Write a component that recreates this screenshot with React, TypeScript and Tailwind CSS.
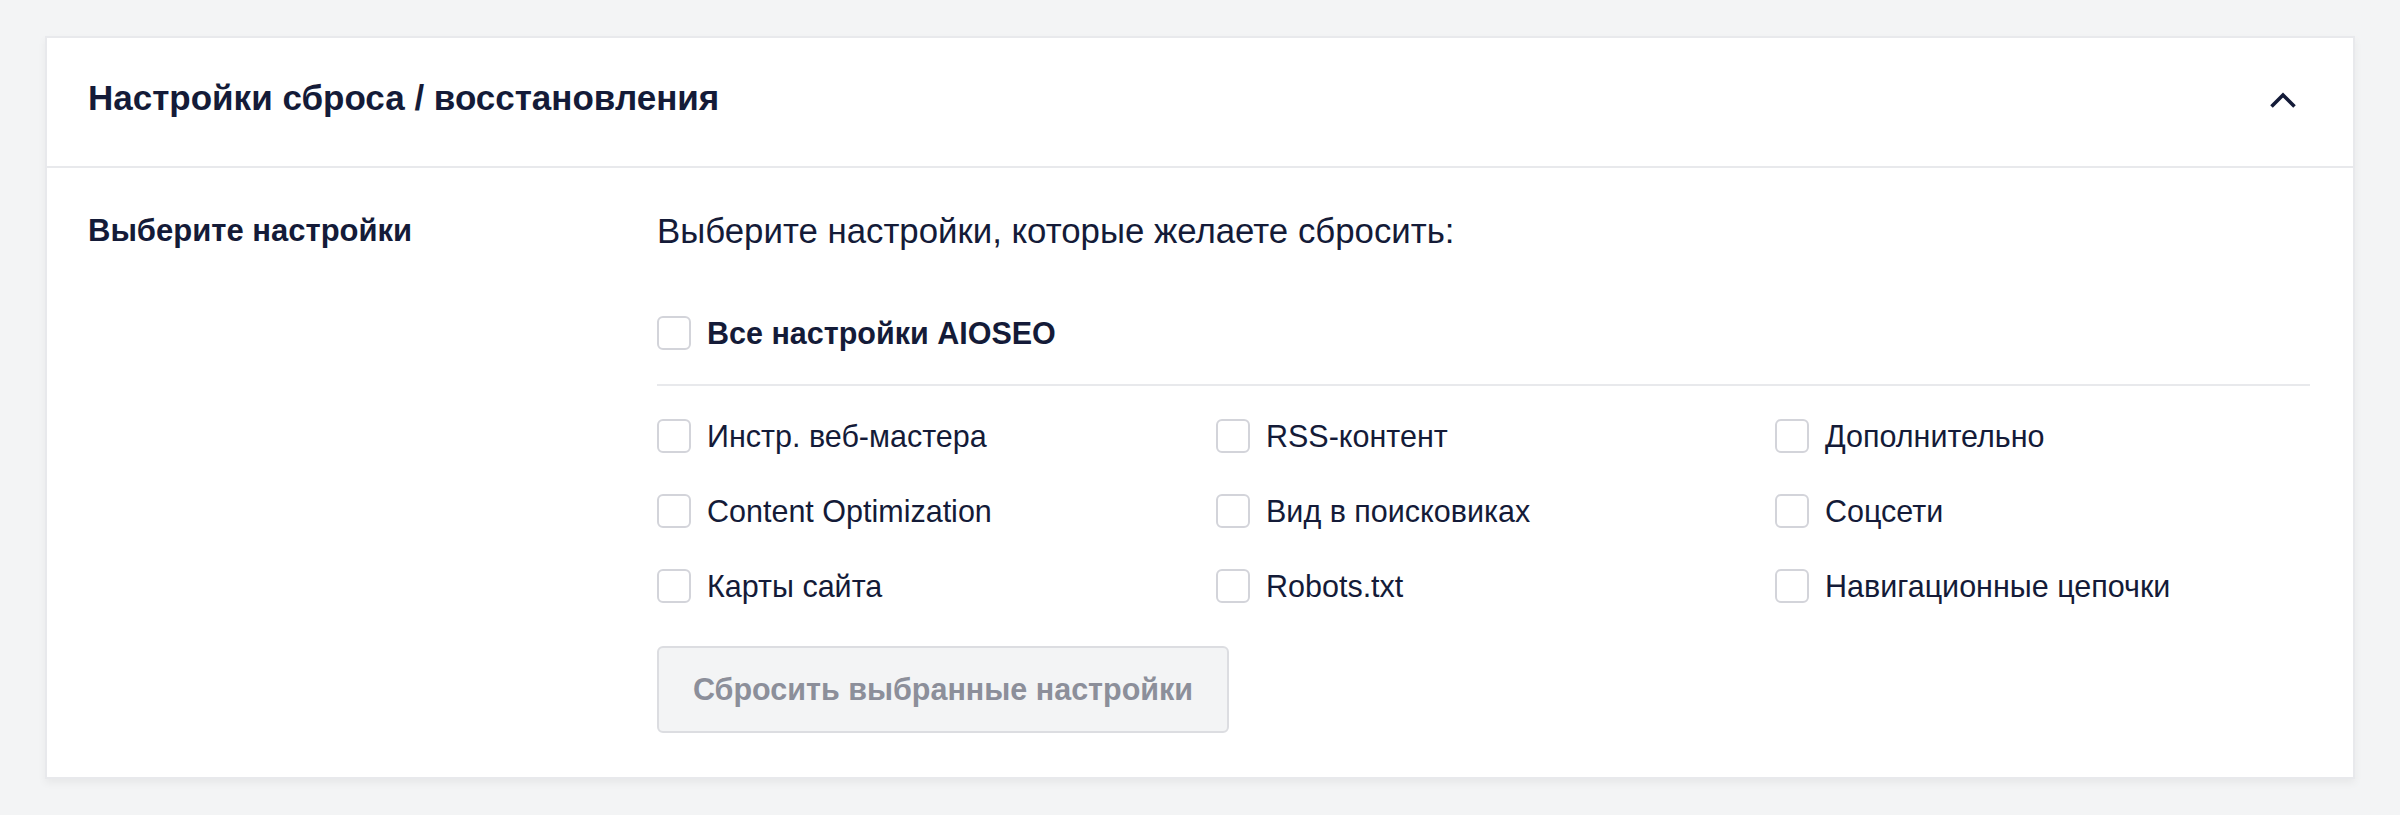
import React, { useState } from 'react';

const items = [
  'Инстр. веб-мастера',
  'RSS-контент',
  'Дополнительно',
  'Content Optimization',
  'Вид в поисковиках',
  'Соцсети',
  'Карты сайта',
  'Robots.txt',
  'Навигационные цепочки',
];

function Box({ checked, onClick }: { checked: boolean; onClick: () => void }) {
  return (
    <button
      type="button"
      onClick={onClick}
      className={`h-[34px] w-[34px] shrink-0 rounded-[6px] border-2 ${
        checked ? 'border-[#005ae0] bg-[#005ae0]' : 'border-[#d3d4da] bg-white'
      }`}
    />
  );
}

export default function App() {
  const [open, setOpen] = useState(true);
  const [all, setAll] = useState(false);
  const [picked, setPicked] = useState<string[]>([]);

  const toggle = (name: string) =>
    setPicked((p) => (p.includes(name) ? p.filter((x) => x !== name) : [...p, name]));

  return (
    <div
      className="min-h-[815px] bg-[#f3f4f5] px-[45px] pt-[36px] text-[#141b38]"
      style={{ fontFamily: '"Liberation Sans", Arial, sans-serif' }}
    >
      <section className="border-2 border-[#e8e9ec] bg-white shadow-[0_4px_8px_rgba(0,0,0,0.05)]">
        <header className="flex h-[130px] items-center justify-between border-b-2 border-[#e8e9ec] pl-[41px] pr-[56px]">
          <h2 className="mb-[10px] text-[35px] font-bold leading-none">Настройки сброса / восстановления</h2>
          <button type="button" onClick={() => setOpen(!open)} className="mb-[4px]">
            <svg width="28" height="17" viewBox="0 0 28 17" fill="none">
              <polyline
                points={open ? '2.5,14.5 14,3 25.5,14.5' : '2.5,3 14,14.5 25.5,3'}
                stroke="#141b38"
                strokeWidth="3.6"
              />
            </svg>
          </button>
        </header>

        {open && (
          <div className="flex pb-[44px] pl-[41px] pr-[43px] pt-[45px]">
            <div className="w-[569px] shrink-0 text-[31px] font-bold leading-[36px]">Выберите настройки</div>
            <div className="min-w-0 flex-1">
              <p className="text-[34.8px] leading-[36px]">Выберите настройки, которые желаете сбросить:</p>

              <label className="mt-[67px] flex items-center gap-[16px]">
                <Box checked={all} onClick={() => setAll(!all)} />
                <span className="text-[30.5px] font-bold leading-none">Все настройки AIOSEO</span>
              </label>

              <div className="mt-[34px] border-t-2 border-[#e8e9ec]" />

              <div className="mt-[33px] grid grid-cols-3 gap-x-[24px] gap-y-[41px]">
                {items.map((name) => (
                  <label key={name} className="flex items-center gap-[16px]">
                    <Box checked={all || picked.includes(name)} onClick={() => toggle(name)} />
                    <span className="text-[30.5px] leading-none">{name}</span>
                  </label>
                ))}
              </div>

              <button
                type="button"
                disabled
                className="mt-[43px] h-[87px] rounded-[6px] border-2 border-[#dcdde1] bg-[#f3f4f5] px-[34px] text-[30.5px] font-bold text-[#8c8f9a]"
              >
                Сбросить выбранные настройки
              </button>
            </div>
          </div>
        )}
      </section>
    </div>
  );
}
